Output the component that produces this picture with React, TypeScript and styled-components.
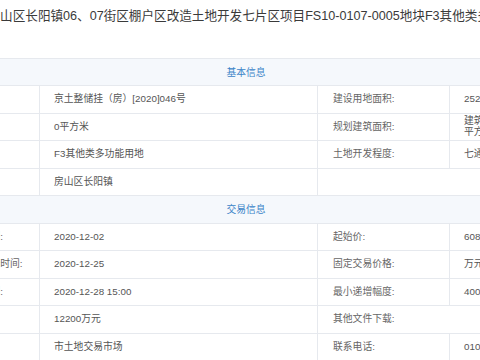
import * as React from 'react';
import styled, { createGlobalStyle } from 'styled-components';

const GlobalStyle = createGlobalStyle`
  html, body {
    margin: 0;
    padding: 0;
    background: #fff;
    overflow: hidden;
  }
  body {
    font-family: "Liberation Sans", "Noto Sans CJK SC", sans-serif;
  }
`;

const Page = styled.div`
  width: 600px;
  margin-left: -54px;
`;

const Title = styled.h1`
  margin: 0;
  height: 57.5px;
  box-sizing: border-box;
  padding: 7px 0 0 41.5px;
  font-size: 12.6px;
  line-height: 18px;
  font-weight: normal;
  color: #3a3a3a;
  white-space: nowrap;
`;

const Table = styled.div`
  border-top: 1px solid #e6e9ee;
  font-size: 9.8px;
`;

const HeadRow = styled.div`
  height: 27.5px;
  box-sizing: border-box;
  border-bottom: 1px solid #e6e9ee;
  background: #f5f8fc;
  color: #3b84c8;
  display: flex;
  align-items: center;
  justify-content: center;
`;

const Row = styled.div`
  height: 27.5px;
  box-sizing: border-box;
  border-bottom: 1px solid #e6e9ee;
  display: grid;
  grid-template-columns: 93px 278px 132px 97px;
`;

const Cell = styled.div<{ $label?: boolean; $line?: boolean }>`
  display: flex;
  align-items: center;
  padding-left: ${(p) => (p.$label ? '15px' : '14px')};
  border-left: ${(p) => (p.$line ? '1px solid #e6e9ee' : 'none')};
  color: ${(p) => (p.$label ? '#666' : '#555')};
  white-space: nowrap;
  overflow: hidden;
  line-height: 10.5px;
`;

const Wrap = styled.span`
  white-space: normal;
`;

interface Item {
  label: string;
  value: React.ReactNode;
  label2: string;
  value2: React.ReactNode;
  noLine?: boolean;
}

const basic: Item[] = [
  { label: '文号:', value: '京土整储挂（房）[2020]046号', label2: '建设用地面积:', value2: '25285.8平方米' },
  {
    label: '面积:',
    value: '0平方米',
    label2: '规划建筑面积:',
    value2: (
      <Wrap>
        建筑规模50566
        <br />
        平方米
      </Wrap>
    ),
  },
  { label: '用途:', value: 'F3其他类多功能用地', label2: '土地开发程度:', value2: '七通一平' },
  { label: '位置:', value: '房山区长阳镇', label2: '', value2: '', noLine: true },
];

const trade: Item[] = [
  { label: '公告时间:', value: '2020-12-02', label2: '起始价:', value2: '60800万元' },
  { label: '挂牌起始时间:', value: '2020-12-25', label2: '固定交易价格:', value2: '万元' },
  { label: '截止时间:', value: '2020-12-28 15:00', label2: '最小递增幅度:', value2: '400万元' },
  { label: '保证金:', value: '12200万元', label2: '其他文件下载:', value2: '', noLine: true },
  { label: '地点:', value: '市土地交易市场', label2: '联系电话:', value2: '010-68052030' },
];

function InfoRow({ item }: { item: Item }) {
  return (
    <Row>
      <Cell $label>{item.label}</Cell>
      <Cell $line>{item.value}</Cell>
      <Cell $label $line>
        {item.label2}
      </Cell>
      <Cell $line={!item.noLine}>{item.value2}</Cell>
    </Row>
  );
}

export default function App() {
  return (
    <>
      <GlobalStyle />
      <Page>
        <Title>房山区长阳镇06、07街区棚户区改造土地开发七片区项目FS10-0107-0005地块F3其他类多功能用地</Title>
        <Table>
          <HeadRow>基本信息</HeadRow>
          {basic.map((item, i) => (
            <InfoRow key={i} item={item} />
          ))}
          <HeadRow>交易信息</HeadRow>
          {trade.map((item, i) => (
            <InfoRow key={i} item={item} />
          ))}
        </Table>
      </Page>
    </>
  );
}
